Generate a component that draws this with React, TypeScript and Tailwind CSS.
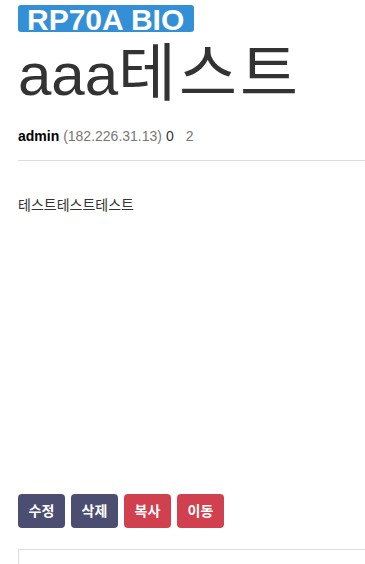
import React from 'react';

const buttons = [
  { label: '수정', color: 'bg-[#4b4e70]' },
  { label: '삭제', color: 'bg-[#4b4e70]' },
  { label: '복사', color: 'bg-[#d1404e]' },
  { label: '이동', color: 'bg-[#d1404e]' },
];

export default function App() {
  return (
    <div className="w-[365px] h-[564px] overflow-hidden bg-white">
      <div className="w-[390px] pl-[18px] text-[#333] font-['Liberation_Sans','Noto_Sans_CJK_KR',sans-serif]">
        {/* badge */}
        <div className="pt-[5px]">
          <div className="inline-block h-[27px] overflow-hidden rounded-[3px] bg-[#3490d6] pl-[9px] pr-[10px]">
            <span className="relative top-[1px] block text-[30px] font-bold leading-[27px] text-white">RP70A BIO</span>
          </div>
        </div>

        {/* title */}
        <h1 className="mt-[2px] h-[68px] text-[60px] font-normal leading-[68px] text-[#333]">
          aaa<span className="text-[63px] leading-[50px] tracking-[3px]">테스트</span>
        </h1>

        {/* meta */}
        <div className="mt-[18px] text-[14px] leading-[18px]">
          <span className="font-bold text-black">admin</span>{' '}
          <span className="text-[#777]">(182.226.31.13)</span>{' '}
          <span className="text-[#333]">0</span>
          <span className="ml-[12px] text-[#777]">2</span>
        </div>

        <hr className="mt-[15px] border-0 border-t border-[#ddd]" />

        {/* content */}
        <div className="mt-[34px] h-[299px] text-[14px] leading-[20px] text-[#333]">테스트테스트테스트</div>

        {/* buttons */}
        <div className="flex gap-[6px]">
          {buttons.map((b) => (
            <button
              key={b.label}
              className={`${b.color} h-[34px] w-[47px] rounded-[4px] text-[14px] font-bold text-white`}
            >
              {b.label}
            </button>
          ))}
        </div>

        <div className="mt-[21px] h-[60px] border border-[#ddd]" />
      </div>
    </div>
  );
}
